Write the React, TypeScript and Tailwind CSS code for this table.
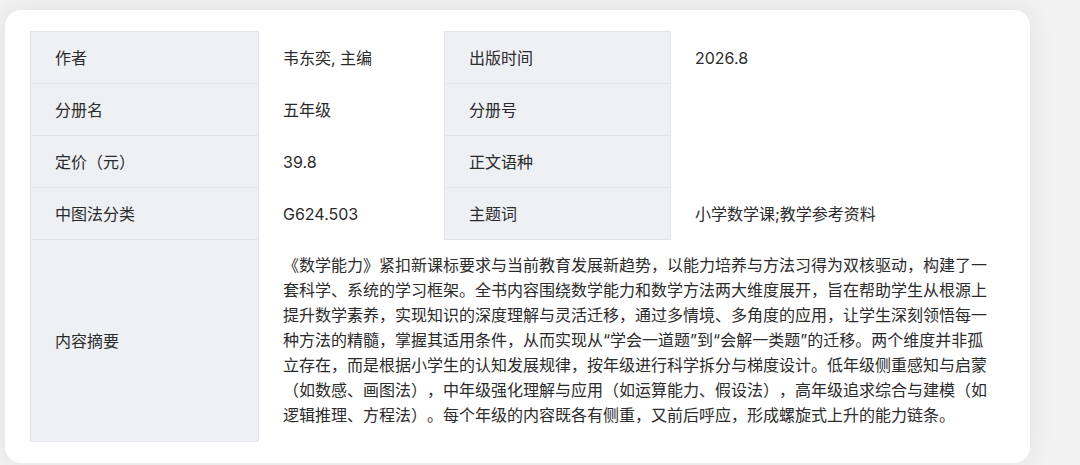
const rows = [
  ['作者', '韦东奕, 主编', '出版时间', '2026.8'],
  ['分册名', '五年级', '分册号', ''],
  ['定价（元）', '39.8', '正文语种', ''],
  ['中图法分类', 'G624.503', '主题词', '小学数学课;教学参考资料'],
];

const summary =
  '《数学能力》紧扣新课标要求与当前教育发展新趋势，以能力培养与方法习得为双核驱动，构建了一套科学、系统的学习框架。全书内容围绕数学能力和数学方法两大维度展开，旨在帮助学生从根源上提升数学素养，实现知识的深度理解与灵活迁移，通过多情境、多角度的应用，让学生深刻领悟每一种方法的精髓，掌握其适用条件，从而实现从“学会一道题”到“会解一类题”的迁移。两个维度并非孤立存在，而是根据小学生的认知发展规律，按年级进行科学拆分与梯度设计。低年级侧重感知与启蒙（如数感、画图法），中年级强化理解与应用（如运算能力、假设法），高年级追求综合与建模（如逻辑推理、方程法）。每个年级的内容既各有侧重，又前后呼应，形成螺旋式上升的能力链条。';

const labelCls = 'h-[52px] border border-[#e3e5ea] bg-[#eef0f4] px-6 py-0 text-left align-middle font-normal';
const valueCls = 'h-[52px] px-6 py-0 text-left align-middle';

export default function App() {
  return (
    <div
      className="h-[465px] overflow-hidden bg-[#f2f2f2] pl-[5px] pt-[10px] text-[16px] text-[#2b2b2b] [text-spacing-trim:space-all]"
      style={{ fontFamily: '"Inter", "Noto Sans CJK SC", sans-serif' }}
    >
      <div className="w-[1025px] rounded-2xl bg-white px-[25px] py-[21px] shadow-[0_0_28px_rgba(0,0,0,0.07)]">
        <table className="w-[976px] table-fixed border-collapse">
          <colgroup>
            <col className="w-[228px]" />
            <col className="w-[186px]" />
            <col className="w-[226px]" />
            <col className="w-[336px]" />
          </colgroup>
          <tbody>
            {rows.map((r) => (
              <tr key={r[0]}>
                <th className={labelCls}>{r[0]}</th>
                <td className={valueCls}>{r[1]}</td>
                <th className={labelCls}>{r[2]}</th>
                <td className={valueCls}>{r[3]}</td>
              </tr>
            ))}
            <tr>
              <th className="h-[202px] border border-[#e3e5ea] bg-[#eef0f4] px-6 text-left align-middle font-normal">
                内容摘要
              </th>
              <td colSpan={3} className="py-[13px] pl-6 pr-4 align-middle leading-[25px]">
                {summary}
              </td>
            </tr>
          </tbody>
        </table>
      </div>
    </div>
  );
}
